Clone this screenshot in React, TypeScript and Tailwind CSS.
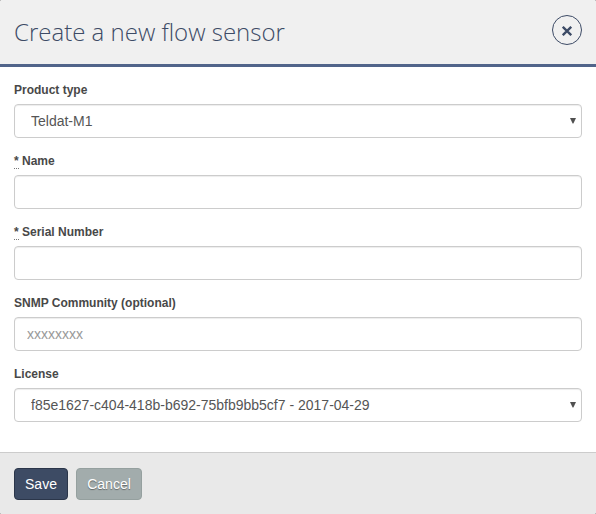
import type { ReactNode } from "react";

const control =
  "block h-[34px] w-full appearance-none rounded border border-[#ccc] bg-white text-sm text-[#555] shadow-[inset_0_1px_1px_rgba(0,0,0,0.075)] outline-none";

function Field({ id, label, required, children }: { id: string; label: string; required?: boolean; children: ReactNode }) {
  return (
    <div className="mb-[15px]">
      <label htmlFor={id} className="mb-[5px] block h-[17px] text-xs leading-[17px] font-bold text-[#484848]">
        {required && (
          <>
            <abbr title="required" className="border-b border-dotted border-[#777] no-underline">*</abbr>{" "}
          </>
        )}
        {label}
      </label>
      {children}
    </div>
  );
}

function Select({ id, value }: { id: string; value: string }) {
  return (
    <div className="relative">
      <select id={id} className={`${control} pl-4 pr-6`}>
        <option>{value}</option>
      </select>
      <svg className="pointer-events-none absolute top-[14px] right-[6px]" width="6" height="6" viewBox="0 0 6 6" fill="#505050">
        <path d="M0 0h6L3.4 5.4h-.8z" />
      </svg>
    </div>
  );
}

export default function App() {
  return (
    <div className="h-[514px] w-[596px] bg-[#777] font-['Liberation_Sans',Arial,sans-serif]">
      <div className="flex h-full flex-col overflow-hidden rounded-[2px] bg-white">
        <header className="flex h-[67px] shrink-0 items-start justify-between border-b-[3px] border-[#51648a] bg-[#f0f0f0] px-[14px] pt-[15px]">
          <h1 className="font-['Open_Sans',sans-serif] text-2xl leading-[34px] font-light text-[#3d4b66]">
            Create a new flow sensor
          </h1>
          <button aria-label="Close" className="flex size-[30px] items-center justify-center rounded-full border border-[#3d4b66]">
            <svg width="10" height="10" viewBox="0 0 10 10" fill="none" stroke="#3d4b66" strokeWidth="2.3" className="mt-[2px]">
              <path d="M.8.8l8.4 8.4M9.2.8L.8 9.2" />
            </svg>
          </button>
        </header>
        <main className="grow px-[14px] pt-[15px]">
          <Field id="type" label="Product type">
            <Select id="type" value="Teldat-M1" />
          </Field>
          <Field id="name" label="Name" required>
            <input id="name" className={`${control} px-3`} />
          </Field>
          <Field id="serial" label="Serial Number" required>
            <input id="serial" className={`${control} px-3`} />
          </Field>
          <Field id="snmp" label="SNMP Community (optional)">
            <input id="snmp" placeholder="xxxxxxxx" className={`${control} px-3 placeholder:text-[#999]`} />
          </Field>
          <Field id="license" label="License">
            <Select id="license" value="f85e1627-c404-418b-b692-75bfb9bb5cf7 - 2017-04-29" />
          </Field>
        </main>
        <footer className="flex h-[62px] shrink-0 gap-2 border-t border-[#ccc] bg-[#e9e9e9] px-[14px] pt-[15px] text-sm text-white">
          <button className="h-8 w-[54px] rounded border border-[#2b364a] bg-[#3d4b64]">Save</button>
          <button className="h-8 w-[66px] rounded border border-[#95a09f] bg-[#a2acac] [text-shadow:0_1px_1px_rgba(0,0,0,0.4)]">Cancel</button>
        </footer>
      </div>
    </div>
  );
}
